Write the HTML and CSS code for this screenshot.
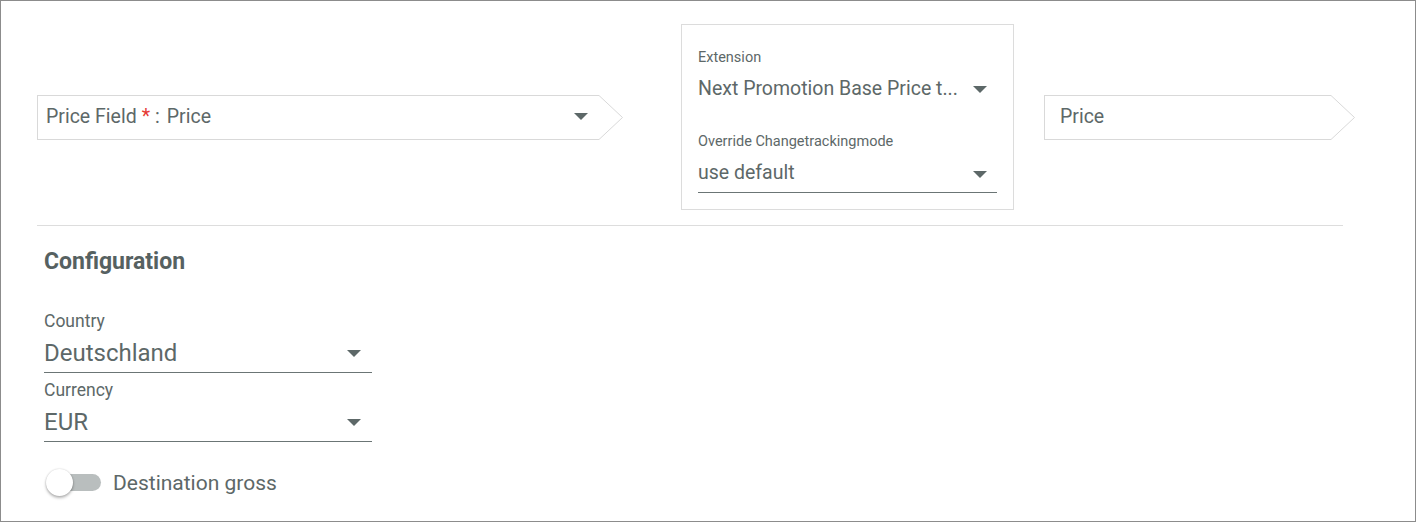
FILE: index.html
```html
<!DOCTYPE html>
<html lang="en">
<head>
<meta charset="utf-8">
<title>Price Field</title>
<link rel="stylesheet" href="styles.css">
</head>
<body>
<div class="frame">
  <div class="top-row">
    <div class="step step-source">
      <div class="step-body">
        <span class="step-label">Price Field</span>
        <span class="req">*</span>
        <span class="colon">:</span>
        <span class="step-value">Price</span>
        <span class="caret caret-step"></span>
      </div>
      <svg class="step-tip" width="24" height="45" viewBox="0 0 24 45"><polyline points="0,0.5 23.5,22.5 0,44.5" fill="none" stroke="#d9d9d9" stroke-width="1"/></svg>
    </div>

    <div class="card">
      <div class="field">
        <div class="field-label">Extension</div>
        <div class="select select-plain">
          <span class="select-text">Next Promotion Base Price t...</span>
          <span class="caret"></span>
        </div>
      </div>
      <div class="field field-second">
        <div class="field-label">Override Changetrackingmode</div>
        <div class="select select-lined">
          <span class="select-text">use default</span>
          <span class="caret"></span>
        </div>
      </div>
    </div>

    <div class="step step-target">
      <div class="step-body">
        <span class="step-value">Price</span>
      </div>
      <svg class="step-tip" width="24" height="45" viewBox="0 0 24 45"><polyline points="0,0.5 23.5,22.5 0,44.5" fill="none" stroke="#d9d9d9" stroke-width="1"/></svg>
    </div>
  </div>

  <div class="divider"></div>

  <div class="config">
    <h2 class="config-title">Configuration</h2>
    <div class="cfield">
      <div class="cfield-label">Country</div>
      <div class="cselect">
        <span class="cselect-text">Deutschland</span>
        <span class="caret"></span>
      </div>
    </div>
    <div class="cfield cfield-next">
      <div class="cfield-label">Currency</div>
      <div class="cselect">
        <span class="cselect-text">EUR</span>
        <span class="caret"></span>
      </div>
    </div>
    <div class="toggle-row">
      <div class="toggle">
        <div class="toggle-track"></div>
        <div class="toggle-thumb"></div>
      </div>
      <span class="toggle-label">Destination gross</span>
    </div>
  </div>
</div>
</body>
</html>
```

FILE: styles.css
```css
html, body {
  margin: 0;
  padding: 0;
  background: #ffffff;
}

body {
  font-family: Roboto, "Liberation Sans", Arial, sans-serif;
  color: #5d6868;
}

.frame {
  box-sizing: border-box;
  width: 1416px;
  height: 522px;
  border: 1px solid #8c8c8c;
  padding: 23px 0 0 36px;
  overflow: hidden;
}

.top-row {
  display: flex;
  align-items: center;
  height: 186px;
}

.step {
  display: flex;
  align-items: stretch;
  height: 45px;
}

.step-body {
  box-sizing: border-box;
  display: flex;
  align-items: center;
  border: 1px solid #d9d9d9;
  border-right: none;
  font-size: 19.5px;
  line-height: 24px;
  padding-bottom: 1px;
}

.step-source .step-body {
  width: 562px;
  padding-left: 8px;
  padding-right: 11px;
}

.step-target {
  margin-left: 30px;
}

.step-target .step-body {
  width: 287px;
  padding-left: 15px;
}

.step-tip {
  display: block;
  flex: none;
}

.req {
  color: #e53935;
  margin-left: 5px;
}

.colon {
  margin-left: 5px;
}

.step-source .step-value {
  margin-left: 7px;
}

.caret {
  flex: none;
  width: 0;
  height: 0;
  border-left: 7px solid transparent;
  border-right: 7px solid transparent;
  border-top: 7px solid #5d6868;
  margin-left: auto;
}

.caret-step {
  margin-top: 0;
}

.card {
  box-sizing: border-box;
  width: 333px;
  height: 186px;
  margin-left: 58px;
  border: 1px solid #dcdcdc;
  padding: 25px 16px 0;
}

.field-label {
  font-size: 14.5px;
  line-height: 16px;
}

.select {
  display: flex;
  align-items: center;
  font-size: 19.5px;
  line-height: 24px;
}

.select .caret {
  margin-right: 10px;
}

.select-plain {
  padding-top: 11px;
}

.field-second {
  margin-top: 33px;
}

.select-lined {
  padding-top: 11px;
  padding-bottom: 7px;
  border-bottom: 1px solid #6b7575;
}

.select-lined .caret {
  margin-top: 3px;
}

.divider {
  width: 1306px;
  height: 1px;
  background: #dddddd;
  margin-top: 15px;
}

.config {
  padding-left: 7px;
}

.config-title {
  margin: 24px 0 0;
  font-size: 23px;
  line-height: 24px;
  font-weight: 700;
  color: #566161;
}

.cfield {
  width: 328px;
  margin-top: 37px;
}

.cfield-next {
  margin-top: 7px;
}

.cfield-label {
  font-size: 17.5px;
  line-height: 20px;
}

.cselect {
  display: flex;
  align-items: center;
  padding-top: 8px;
  padding-bottom: 5px;
  border-bottom: 1px solid #6b7575;
  font-size: 24px;
  line-height: 28px;
}

.cselect .caret {
  margin-right: 11px;
}

.toggle-row {
  display: flex;
  align-items: center;
  margin-top: 27px;
  margin-left: 2px;
}

.toggle {
  position: relative;
  width: 55px;
  height: 28px;
  flex: none;
}

.toggle-track {
  position: absolute;
  left: 6px;
  top: 5px;
  width: 49px;
  height: 17px;
  border-radius: 9px;
  background: #b9bebe;
}

.toggle-thumb {
  position: absolute;
  left: 0;
  top: 0;
  width: 27px;
  height: 27px;
  border-radius: 50%;
  background: #ffffff;
  box-shadow: 0 2px 3px rgba(0, 0, 0, 0.28), 0 0 2px rgba(0, 0, 0, 0.18);
}

.toggle-label {
  margin-left: 12px;
  font-size: 21px;
  line-height: 24px;
}
```
